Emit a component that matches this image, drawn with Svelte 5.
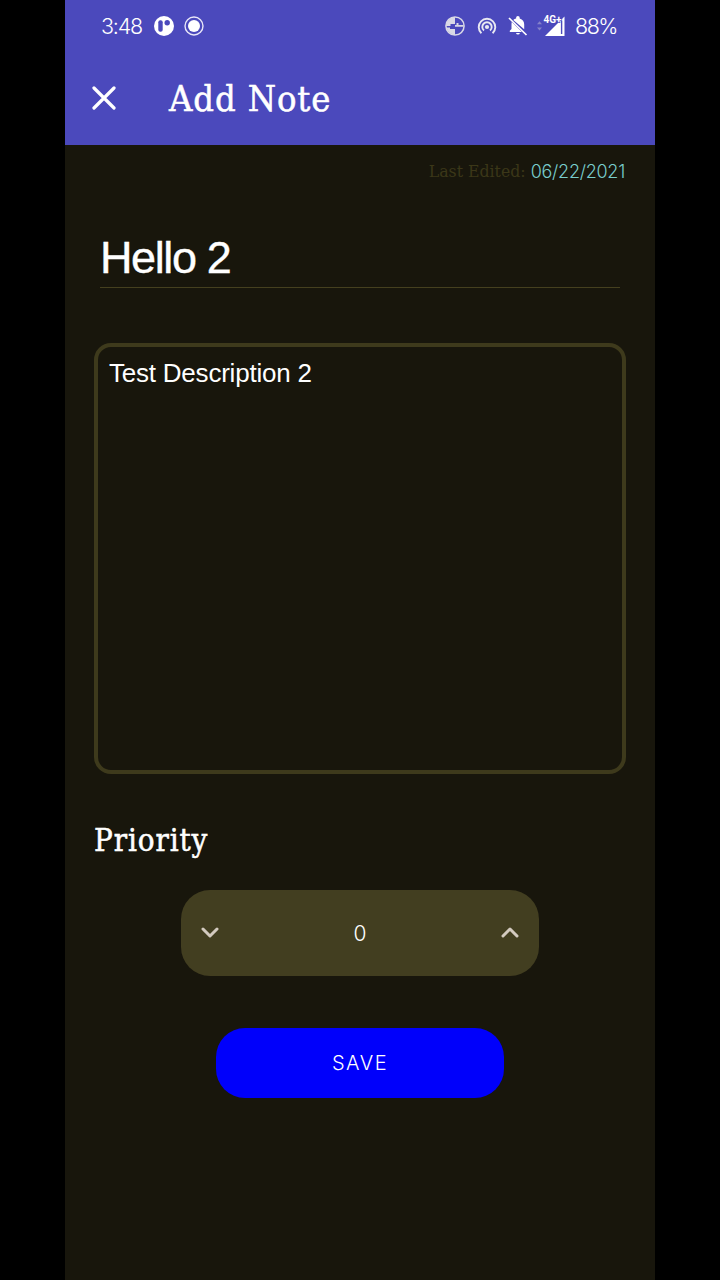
<script>
  let priority = $state(0);
</script>

<div class="screen">
  <main class="phone">
    <header>
      <div class="status">
        <span class="time">3:48</span>
        <svg class="patreon" width="20" height="20" viewBox="0 0 20 20"><circle cx="10" cy="10" r="10" fill="#fff"/><rect x="4.3" y="4.3" width="4.4" height="11.4" rx="2" fill="#4b49bc"/><circle cx="13.2" cy="6.8" r="2.7" fill="#4b49bc"/></svg>
        <svg class="record" width="20" height="20" viewBox="0 0 20 20"><circle cx="10" cy="10" r="9" fill="none" stroke="#e8e6f8" stroke-width="1.4"/><circle cx="10" cy="10" r="6" fill="#fff"/></svg>
        <span class="grow"></span>
        <svg class="saver" width="20" height="20" viewBox="0 0 20 20"><circle cx="10" cy="10" r="9.1" fill="none" stroke="#d9d9e6" stroke-width="1.5"/><path d="M10 1A9 9 0 0 0 1 10H5.5V8H10ZM1.5 11.5A9 9 0 0 0 10 19V13H5V11.5Z" fill="#d9d9e6"/><path d="M10 9H11.5V7H13.5V9H18.5V10.7H10Z" fill="#d9d9e6"/></svg>
        <svg class="hotspot" width="20" height="20" viewBox="0 0 20 20" fill="none" stroke="#e9e9f2" stroke-width="1.9"><path d="M4.4 17.2A8.3 8.3 0 1 1 15.6 17.2"/><path d="M7 14.6A4.7 4.7 0 1 1 13 14.6"/><circle cx="10" cy="11" r="2.1" fill="#e9e9f2" stroke="none"/></svg>
        <svg class="bell" width="20" height="20" viewBox="0 0 20 20"><path d="M5.3 3.9C6 3.2 7 2.8 8.1 2.5V1.8a1.8 1.8 0 0 1 3.6 0v.7c3 .8 4.5 3.2 4.5 6v4.8ZM3.8 6.1 13.9 15.9H1.8v-1.2l1.7-1.8V8.5c0-.9.1-1.7.3-2.4ZM8 17h3.9a2 2 0 0 1-3.9 0Z" fill="#fff"/><path d="m1 2 17.5 17" stroke="#fff" stroke-width="1.7"/></svg>
        <svg class="signal" width="30" height="22" viewBox="0 0 30 22"><path d="m0 9.2 2.5-3 2.5 3ZM0 12.5l2.5 3 2.5-3Z" fill="#8582ca"/><path d="M8 21 27.5 1.5V21Z" fill="#fff"/><path d="M24.6 6v13" stroke="#4b49bc" stroke-width="1.4"/><text x="6.5" y="8.2">4G+</text></svg>
        <span class="battery">88%</span>
      </div>
      <div class="bar">
        <svg width="24" height="24" viewBox="0 0 24 24"><path d="m2 2 20 20M22 2 2 22" stroke="#fff" stroke-width="3.2" stroke-linecap="round"/></svg>
        <h1>Add Note</h1>
      </div>
    </header>
    <section>
      <p class="edited"><span class="label">Last Edited:</span><span class="date">06/22/2021</span></p>
      <div class="title"><span>Hello 2</span></div>
      <div class="description"><span>Test Description 2</span></div>
      <h2><span>Priority</span></h2>
      <div class="stepper">
        <button aria-label="Decrease" onclick={() => priority--}><svg width="18" height="12" viewBox="0 0 18 12"><path d="m2 2 7 7 7-7"/></svg></button>
        <output>{priority}</output>
        <button aria-label="Increase" onclick={() => priority++}><svg width="18" height="12" viewBox="0 0 18 12"><path d="m2 9 7-7 7 7"/></svg></button>
      </div>
      <button class="save">SAVE</button>
    </section>
  </main>
</div>

<style>
  :global(body) { background: #000; }
  * { box-sizing: border-box; }
  .screen { height: 1280px; display: flex; justify-content: center; background: #000; overflow: hidden; }
  .phone { width: 590px; height: 1280px; background: #18160c; color: #fff; font-family: "Liberation Sans", sans-serif; }
  header { height: 145px; background: #4b49bc; }
  .status { height: 51px; padding: 0 38px 0 36px; display: flex; align-items: center; font-family: Inter, sans-serif; font-weight: 300; font-size: 21.5px; white-space: nowrap; }
  .time { width: 53px; letter-spacing: -1.2px; }
  .record { margin-left: 10px; }
  .grow { flex: 1; }
  .hotspot { margin-left: 12px; }
  .bell { margin-left: 11px; }
  .signal { margin-left: 9px; }
  .signal text { font: 700 10px Roboto, sans-serif; fill: #fff; stroke: #4b49bc; stroke-width: 1.5px; paint-order: stroke; }
  .battery { width: 42px; margin-left: 8px; letter-spacing: -1.5px; }
  svg { display: block; flex: none; }
  .bar { height: 94px; padding-left: 27px; display: flex; align-items: center; gap: 53px; }
  h1, h2 { margin: 0; font-family: "DejaVu Serif Condensed", "DejaVu Serif", serif; font-stretch: condensed; font-weight: 400; white-space: nowrap; -webkit-text-stroke: 0.5px #fff; }
  h1 { font-size: 36px; line-height: 46px; letter-spacing: 0.9px; padding-top: 2px; }
  section { padding: 0 29px; display: flex; flex-direction: column; }
  p { margin: 0; }
  .edited { height: 52px; padding-right: 1px; display: flex; justify-content: flex-end; align-items: center; gap: 5px; white-space: nowrap; }
  .label { color: #3b3718; font: 17.5px "DejaVu Serif Condensed", "DejaVu Serif", serif; font-stretch: condensed; }
  .date { color: #78cdcc; font-family: Inter, sans-serif; font-weight: 300; font-size: 18px; letter-spacing: -0.25px; }
  .title { height: 91px; margin: 0 6px; padding-top: 35px; border-bottom: 1px solid #45401f; font-size: 45px; line-height: 52px; letter-spacing: -1.4px; -webkit-text-stroke: 0.4px #fff; }
  .description { height: 431px; margin-top: 55px; padding: 10px 11px; border: 4px solid #3e3a1c; border-radius: 17px; font-size: 26px; line-height: 32px; letter-spacing: -0.22px; }
  h2 { margin-top: 45px; font-size: 31px; line-height: 42px; letter-spacing: 0.9px; }
  .stepper { align-self: center; width: 358px; height: 86px; margin-top: 29px; padding: 0 20px; display: flex; align-items: center; justify-content: space-between; border-radius: 29px; background: #423e20; }
  button { padding: 0; border: 0; background: none; color: #fff; }
  .stepper path { fill: none; stroke: #d3cabf; stroke-width: 3; stroke-linecap: round; stroke-linejoin: round; }
  output { font: 300 21px Inter, sans-serif; }
  .save { align-self: center; width: 288px; height: 70px; margin-top: 52px; border-radius: 29px; background: #0000fb; font: 300 20px Inter, sans-serif; letter-spacing: 1.5px; }
</style>
